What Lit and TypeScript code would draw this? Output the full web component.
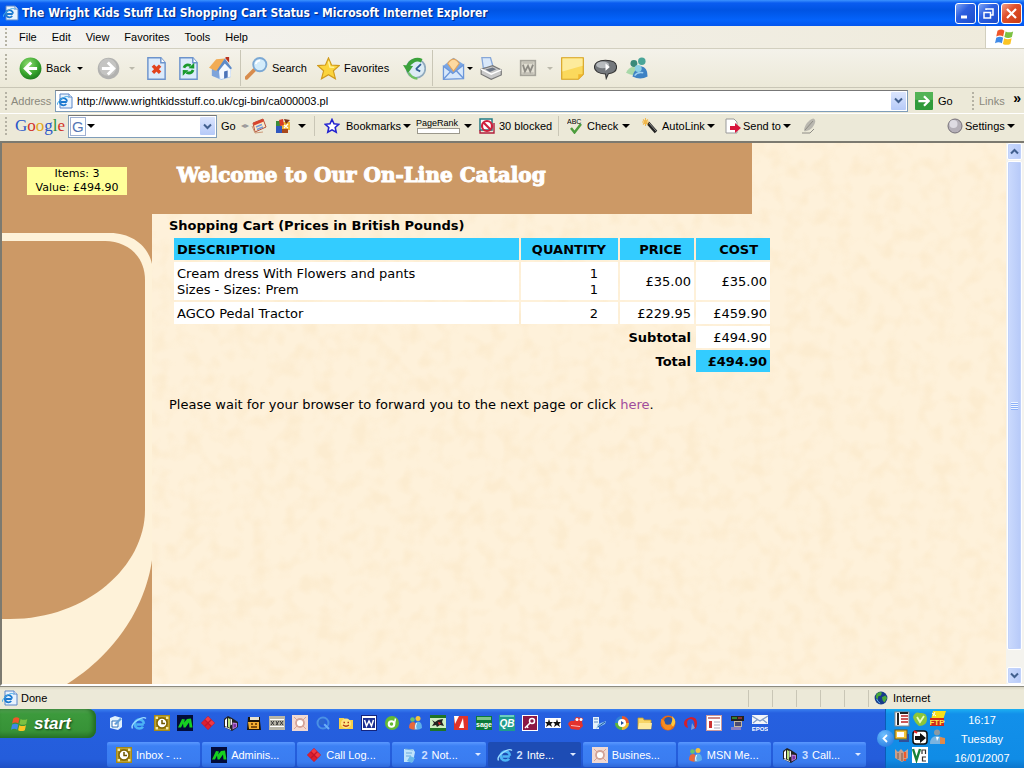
import { LitElement, html, svg, css } from "lit";
import { customElement, property } from "lit/decorators.js";
import { classMap } from "lit/directives/class-map.js";

const flag = svg`
  <path d="M2 3q3-2 5.500 0l-1 4.500q-2.500-1.500-5.500 0z" fill="#f0562a"/>
  <path d="M8.500 3.500q3 1.500 6 0l-1 4.500q-3 1.500-6 0z" fill="#7cc142"/>
  <path d="M1 8.500q3-1.500 5.500 0l-1 4.500q-2.500-1.500-5.500 0z" fill="#3f8ae8"/>
  <path d="M7.300 9q3 1.500 6 0l-1 4.500q-3 1.500-6 0z" fill="#fbc424"/>`;
const ieMark = svg`
  <path d="M12.800 9.500H5.300M12.900 8.800A4.600 4.600 0 1 0 12 11.700" fill="none" stroke="#4db4f5" stroke-width="2.600"/>
  <path d="M1.500 13.500Q-.5 10 6 5.500T15 3.500" fill="none" stroke="#9bdcff" stroke-width="1.400"/>`;
const cube = svg`
  <path d="M1 4l4-3 4 2 6 4v5l-6 4-8-4z" fill="#222"/>
  <path d="M2 5l2-2v9l-2-1z" fill="#fff"/><path d="M5 3l2 1v9l-2-1z" fill="#b8e07c"/>
  <path d="M7.500 3.500l1.500 1v5l-1.500 1z" fill="#eee"/>
  <path d="M9.500 7.500l4.500.5v4l-4.500 2.500z" fill="#b87ad8"/><path d="M10.500 9l2.500.3v2.500l-2.500 1z" fill="#7a2fa0"/><path d="M2 12l6 2.500" stroke="#ddd"/>`;
const messenger = svg`
  <circle cx="5.500" cy="4.500" r="2.300" fill="#69c36c"/><path d="M2 13q0-6 4-6t5 7q-5 2-9-1z" fill="#e8683c"/>
  <circle cx="11" cy="3.500" r="2.500" fill="#f5c33c"/><path d="M7.500 14.500q0-8 3.500-8 4 0 4 6.500-3 2.500-7.500 1.500z" fill="#5fb0ea"/><path d="M9 14q-1-3 .5-6" stroke="#fff" fill="none"/>`;
const outlook = svg`
  <rect width="16" height="16" fill="#a98a12"/><rect x="1.500" y="1.500" width="13" height="13" fill="#f4e9a4"/>
  <path d="M4 1.500h8v13H4zM1.500 4h13v8h-13z" fill="#a98a12"/>
  <circle cx="8" cy="8" r="5" fill="#fff" stroke="#7d6506" stroke-width="1.400"/><path d="M8 5v3.500h3" fill="none" stroke="#6b5500" stroke-width="1.500"/>`;
const admin = svg`
  <rect width="16" height="16" fill="#020c3a"/><path d="M1 12.500L5 4l3 .5-1 3L10 4l4-.5 1.500 9h-3L12 7.500l-3.500 5h-2L6 8.500l-2 4z" fill="#16d022"/>`;
const diamond = svg`
  <path d="M8 1l7 7-7 7-7-7z" fill="#c4162a"/>
  <path d="M8 1.500L10.800 4.300 8 7.100 5.200 4.300zM11.700 5.200L14.500 8l-2.800 2.800L8.900 8z" fill="#f03a44"/><path d="M4.300 5.200L7.100 8l-2.800 2.800L1.500 8zM8 8.900l2.800 2.800L8 14.500l-2.800-2.800z" fill="#dc2030"/>`;
const crest = svg`
  <rect width="16" height="16" fill="#f1d9d2"/><circle cx="8" cy="8" r="4" fill="#fff" stroke="#d3a499" stroke-width="1.800"/>
  <path d="M2 2l3 3M14 2l-3 3M2 14l3-3M14 14l-3-3" stroke="#d9a394"/>`;
const pageIe = svg`
  <path d="M3 1h9l3 3v11H3z" fill="#e8f2fd" stroke="#5a86c8"/><path d="M12 1v3h3" fill="#fff" stroke="#5a86c8"/>
  <path d="M9.800 9H4M10 8.500A3.600 3.600 0 1 0 9.200 11" fill="none" stroke="#1b78cf" stroke-width="1.900"/>
  <path d="M0 12Q0 9 5 5.500T12 4.500" fill="none" stroke="#4aaee8"/>`;

const icons: Record<string, unknown> = {
  flag, pageIe, outlook, admin, diamond, crest, cube, messenger, ie: ieMark,
  back: svg`<defs><radialGradient id="g" cx=".4" cy=".3" r=".8"><stop offset="0" stop-color="#8fdc70"/><stop offset=".6" stop-color="#37a32c"/><stop offset="1" stop-color="#17701a"/></radialGradient></defs>
    <circle cx="8" cy="8" r="7.600" fill="url(#g)"/><path d="M8.500 3.800L4.300 8l4.200 4.200M4.600 8h8" fill="none" stroke="#fff" stroke-width="2"/>`,
  forward: svg`<circle cx="8" cy="8" r="7.500" fill="#b2b2b0"/><circle cx="7.500" cy="7" r="6" fill="#c4c4c2"/><path d="M7.500 3.800L11.700 8l-4.200 4.200M11.400 8h-8" fill="none" stroke="#fff" stroke-width="2"/>`,
  stop: svg`<path d="M2 .5h9L14 4v11.500H2z" fill="#dcebfb" stroke="#6c93cc"/><path d="M11 .5V4h3" fill="#fff" stroke="#6c93cc"/><path d="M5.500 6l5 5M10.500 6l-5 5" stroke="#e2431e" stroke-width="2.400"/>`,
  refresh: svg`<path d="M2 .5h9L14 4v11.500H2z" fill="#dcebfb" stroke="#6c93cc"/><path d="M11 .5V4h3" fill="#fff" stroke="#6c93cc"/><path d="M4.800 7.500Q6 4.500 9.500 6M11.200 9Q10 12 6.500 10.800" fill="none" stroke="#199a2d" stroke-width="1.900"/><path d="M8 7.800l4 .2V4zM8 9.200l-4-.2v4z" fill="#199a2d"/>`,
  home: svg`<path d="M2 7.500l5-2 4-4 4.500 6L15 14l-6.500 2L2 13z" fill="#a9c8f0"/><path d="M6.500 8.500L11 4l4 4v5.500l-7 2z" fill="#f4f8fe"/><path d="M2 8l5 1.500V15l-5-2z" fill="#7ea4da"/><path d="M0 7.500L5 1.500 11 1 6.500 8.800l-2 .8z" fill="#f2ac54"/><path d="M11 1l5 6.800-1.200.8L11 4.500 6.500 10l-1-.7z" fill="#5e8ac8"/><path d="M10.500 10l2.500-.6v4.800l-2.500.7z" fill="#4c73b8"/><path d="M11.500 0H14v4l-2.500-3z" fill="#b8321e"/>`,
  search: svg`<path d="M6.500 9L1 14.500" stroke="#d88c4c" stroke-width="2.600" stroke-linecap="round"/><circle cx="10.300" cy="5.300" r="4.600" fill="#d3ecfb" stroke="#7ba8d4" stroke-width="1.300"/><path d="M7.500 5q.5-2.500 3-2.500" fill="none" stroke="#fff" stroke-width="1.200"/>`,
  star: svg`<path d="M8 .6l2.100 5 5.400.4-4.100 3.600 1.400 5.600L8 12.300l-4.900 2.900 1.500-5.600L.5 6l5.400-.4z" fill="#fbd43c" stroke="#d09a1c" stroke-width=".8"/><path d="M8 3l1 4 3 .2" fill="none" stroke="#fff3a0"/>`,
  history: svg`<circle cx="9" cy="8" r="6.500" fill="#dcebf5" stroke="#8fa9bd" stroke-width="1.200"/><path d="M9 8.500l3.500-3.500M9 8.500l3 1.500" stroke="#315f95" stroke-width="1.200"/><path d="M13 2.600A6.800 6.800 0 0 0 3.500 7" fill="none" stroke="#3ba23a" stroke-width="2.600"/><path d="M0 5.500l7 .8-3.500 5z" fill="#3ba23a"/><path d="M4 11q2 4 6 4" fill="none" stroke="#6dc162" stroke-width="1.600"/>`,
  mail: svg`<path d="M1 6l7-5.500L15 5v10L1 15.500z" fill="#7aa6e4"/><path d="M4 4.500Q8-1.500 12 4.500L8 10z" fill="#fdd9a0" stroke="#e2a45c" stroke-width=".8"/><path d="M1 6.500l6.500 5 7.500-6V15L1 15.500z" fill="#d7e8fb" stroke="#6c97da" stroke-width=".9"/><path d="M1 15.500L6 10M15 15l-5-5.500" stroke="#6c97da"/>`,
  print: svg`<path d="M2 .5h6l2 7H3z" fill="#d9e8fa" stroke="#87a7d8" stroke-width=".9"/><path d="M1.500 8.500l8-2.500 6 3v3.500l-7 3-7-3.500z" fill="#c9c9c9" stroke="#777" stroke-width=".8"/><path d="M1.500 8.500l7 3.500 7-3" fill="none" stroke="#fff"/><path d="M4.500 8.700l5-1.400 2.500 1.200-4.500 2z" fill="#6d7685"/>`,
  wordGray: svg`<rect x="1.500" y="1.500" width="13" height="13" fill="#e2dfd3" stroke="#a5a39a" stroke-width="1.500"/><path d="M3.500 5l1.800 6L8 6l2 5 2.500-6" fill="none" stroke="#8d8b84" stroke-width="1.600"/><path d="M3 12.500h10M3 3.500h10" stroke="#a5a39a" stroke-width=".8"/>`,
  note: svg`<path d="M.5.500h15V12L12 15.500H.5z" fill="#fbd95c" stroke="#d6a11d" stroke-width=".8"/><path d="M1 1h14v5L1 10z" fill="#fdeb9c"/><path d="M15.500 12H12v3.500z" fill="#f1b62c"/>`,
  bubble: svg`<path d="M8 2.200c5 0 7.700 2 7.700 4.800S13 11.300 10 11.600L8.500 15 8 11.800C3 11.800.3 9.600.3 7S3 2.200 8 2.200z" fill="#74787c" stroke="#333" stroke-width=".7"/><ellipse cx="6" cy="5.500" rx="4.500" ry="2.300" fill="#b7bbbe"/><path d="M8 4.500l3 2.500-3 2.500z" fill="#fff"/>`,
  people: svg`<circle cx="5.500" cy="4.500" r="2.400" fill="#3a8a7a"/><circle cx="11" cy="3" r="2.600" fill="#4aa598"/><path d="M0 11q2-4 5-4t4 4q-4 3-9 0z" fill="#a8d8a8"/><path d="M4.500 13.500Q6 8 10.500 6.500 15 7 15 13.500q-5 3-10.500 0z" fill="#3e82c4"/><circle cx="8.500" cy="8" r="2.400" fill="#8cd0e4"/><path d="M6 13q2-3 6-2" stroke="#9fd0f0" fill="none"/>`,
  go: svg`<rect width="16" height="16" rx="1" fill="#2f9a3a"/><path d="M0 0h16v7H0z" fill="#52b355"/><path d="M8 3.800L12.200 8 8 12.200M12 8H3" fill="none" stroke="#fff" stroke-width="2"/>`,
  calendar: svg`<path d="M2 5l10-4 3 8-11 5z" fill="#fbe9c8" stroke="#b5503c"/><path d="M2 5l10-4 .8 2.500L3 7.500z" fill="#d8432c"/><path d="M5 9l6-2.500M6 11.500l6-2.500" stroke="#769ad8" stroke-width="1.500"/><path d="M1 8l3 7 8-1" fill="none" stroke="#c97"/>`,
  gadgets: svg`<rect x="1" y="3" width="6" height="6" fill="#3a8c3a"/><rect x="6" y="4" width="9" height="8" fill="#f2b632"/><rect x="1" y="8" width="6" height="7" fill="#3058c0"/><path d="M4 2l4-1 1 6-4 1z" fill="#d93a26"/><path d="M9 1l6 1-4 4z" fill="#7a3418"/><path d="M7 11h6v4H7z" fill="#a8481c"/><path d="M9 7l4 3M13 6l-4 4" stroke="#fff" stroke-width="1.200"/>`,
  blueStar: svg`<path d="M8 1.500l2 4.300 4.700.5-3.500 3.200 1 4.700L8 11.800l-4.200 2.400 1-4.700L1.300 6.300 6 5.800z" fill="#fff" stroke="#2222d0" stroke-width="1.600"/>`,
  blocked: svg`<rect x="1" y="1" width="12" height="11" fill="#fff" stroke="#227a82" stroke-width="1.500"/><circle cx="8" cy="8" r="5" fill="none" stroke="#cf1f3c" stroke-width="2.200"/><path d="M4.500 4.500l7 7" stroke="#cf1f3c" stroke-width="2.200"/><path d="M1 12v3h14V5" fill="none" stroke="#b01f3c" stroke-width="1.400"/>`,
  check: svg`<text x="0" y="6" font-size="7" font-family="Liberation Sans">ABC</text><path d="M4 10l3.500 4.500L14 6" fill="none" stroke="#4c9d3c" stroke-width="2.400"/>`,
  wand: svg`<path d="M6 5l8 9" stroke="#222" stroke-width="3.400"/><path d="M7 5l7 8" stroke="#aaa" stroke-width=".8"/><path d="M3.500 0v8M0 4h7M1 1.500l5 5M6 1.500l-5 5" stroke="#f2b84a" stroke-width="1.100"/>`,
  send: svg`<path d="M1 1h8l3 3v11H1z" fill="#fff" stroke="#999"/><path d="M5 8h5V5l6 5-6 5v-3H5z" fill="#d8153c"/>`,
  pen: svg`<path d="M3 13Q3 7 9 2q4-3 5 0t-3 8q-4 4-8 3z" fill="#b9b7af"/><path d="M4 12L12 3M1 15h8l4-4" fill="none" stroke="#8e8c85"/>`,
  ball: svg`<circle cx="8" cy="8" r="7" fill="#b5b0b8" stroke="#77727a"/><circle cx="6.500" cy="6" r="4" fill="#dedbe2"/>`,
  globe: svg`<circle cx="8" cy="8" r="7.300" fill="#173a8c"/><path d="M3 3q4-3 6-1l-1 3-3 1-1 4-2-3zM9 7l4-2 2 3-3 5-2-2z" fill="#48a83a"/><path d="M3 9q1 3 4 5" stroke="#6cc3ff" fill="none"/>`,
  desk: svg`<path d="M2 3l5-2 7 2v9l-4 3-8-2z" fill="#dff0fd"/><path d="M4 6h6v6H4z" fill="#fff" stroke="#2d6fb8"/><path d="M6 9l6-6 2 1-6 6z" fill="#5f9cd8"/>`,
  bear: svg`<path d="M2 2h12v4l1 9H1z" fill="#1c1408"/><path d="M4 2h9v3H4z" fill="#e9e2cf"/><path d="M2 7h11v7H3z" fill="#f2ae32"/><path d="M5 9h2M9 9h2M5 12h6" stroke="#5b3100" stroke-width="1.300"/>`,
  film: svg`<path d="M0 1h16v14H0z" fill="#b7b5a8"/><path d="M1 4h14v1H1zM1 11h14v1H1z" fill="#fff"/><path d="M2 6l3 4M5 6l-3 4M7 6l2 4M10 6l-3 4M11 6l3 4M14 6l-3 4" stroke="#333"/>`,
  qt: svg`<circle cx="8" cy="8" r="5.500" fill="none" stroke="#4a90e4" stroke-width="2"/><path d="M9 9l5 5" stroke="#6cb0f8" stroke-width="2"/><circle cx="7" cy="7" r="3" fill="#2c67cf"/>`,
  smile: svg`<path d="M1 3h5l1 2h8v9H1z" fill="#f7cf48"/><circle cx="8" cy="8.500" r="5" fill="#ffe682"/><path d="M5.500 7.500H7M9.500 7.500H11M5 10q3 2.500 6 0" stroke="#b73a12" fill="none" stroke-width="1.300"/>`,
  word: svg`<rect x=".5" y=".5" width="15" height="15" fill="#fff" stroke="#14247c"/><rect x="2" y="3" width="12" height="10" fill="#1c2f92"/><path d="M3.500 5l2 6L8 6l2.500 5 2-6" fill="none" stroke="#fff" stroke-width="1.500"/>`,
  green: svg`<circle cx="8" cy="8" r="7" fill="#65bb33"/><circle cx="7.500" cy="9" r="2.800" fill="none" stroke="#fff" stroke-width="2"/><path d="M11.500 3.500L10 11" stroke="#fff" stroke-width="1.500"/>`,
  dragon: svg`<rect width="16" height="16" fill="#cfeec2"/><path d="M0 0h16v3H0zM0 13h16v3H0z" fill="#1f7426"/><path d="M2 5l3 2 3-2 5-1-1 3 2 4-4-1-3 2-1-2-4 1 2-3z" fill="#222"/><path d="M8 7l3 1-2 2z" fill="#e22"/>`,
  redCard: svg`<rect x="1" y="1" width="14" height="14" fill="#e0332a"/><path d="M1 1h5L2 9zM6 13l4-10 1 10z" fill="#fff"/>`,
  sage: svg`<rect y="1" width="16" height="14" fill="#0d7a3a"/><path d="M1 2h14v3H1z" fill="#7cc48a"/><text x="8" y="12" font-size="7" font-weight="bold" font-family="Liberation Sans" text-anchor="middle" fill="#fff">sage</text>`,
  qb: svg`<rect width="16" height="16" fill="#1f9c8c"/><path d="M1 1h14" stroke="#bfe"/><text x="8" y="12" font-size="10" font-weight="bold" font-style="italic" font-family="Liberation Sans" text-anchor="middle" fill="#fff">QB</text>`,
  key: svg`<rect x=".5" y=".5" width="15" height="15" fill="#8c1845" stroke="#fff"/><circle cx="10" cy="6" r="2.500" fill="none" stroke="#fff" stroke-width="1.500"/><path d="M8 8l-5 5M5 11l1 2" stroke="#fff" stroke-width="1.500"/>`,
  stars: svg`<rect y="3" width="16" height="10" fill="#fff"/><path d="M4 4l1 3h3L6 9l1 3-3-2-3 2 1-3-2-2h3zM12 4l1 3h3l-2 2 1 3-3-2-3 2 1-3-2-2h3z" fill="#111"/>`,
  redMan: svg`<path d="M0 9q2-4 6-3l2-4 7 1-1 4 1 4-4 4-8-1z" fill="#e4322c"/><circle cx="9" cy="4.500" r="1.500" fill="#fff"/><circle cx="13" cy="4.500" r="1.500" fill="#fff"/><path d="M3 10.500l9 1" stroke="#fbb"/>`,
  tools: svg`<path d="M2 2h6v12H2z" fill="#e7f2fb"/><path d="M3 4h4M3 7h4" stroke="#5a8ac0"/><path d="M5 14l2-5 8-3-1 3-6 3z" fill="#8cc0ea"/><path d="M7 12l7-5" stroke="#1d5aa8"/>`,
  media: svg`<circle cx="8" cy="8" r="7" fill="#2f7fd6"/><path d="M8 1a7 7 0 0 1 7 7H8z" fill="#e8552a"/><path d="M15 8a7 7 0 0 1-7 7V8z" fill="#f0b92c"/><path d="M8 15a7 7 0 0 1-7-7h7z" fill="#5cb23a"/><circle cx="8" cy="8" r="4" fill="#fff"/><path d="M7 6l3 2-3 2z" fill="#234f9a"/>`,
  folder: svg`<path d="M1 3h5l1 2h7v9H1z" fill="#f7d467" stroke="#c99a24" stroke-width=".8"/><path d="M2 8h13l-1 6H1z" fill="#fdeaa0"/>`,
  firefox: svg`<circle cx="8" cy="8" r="7.500" fill="#e56a17"/><circle cx="8.500" cy="6.500" r="4.500" fill="#2a55a8"/><path d="M1 4q4 1 4 4t7 1q1 5-4 6-7-2-7-11z" fill="#f58c20"/><path d="M12 1q6 5 1 11l-2-3q2-4 1-8z" fill="#ffc83c"/>`,
  opera: svg`<path d="M8 2q6 0 6 6t-3 6q2-9-3-10-6 0-3 9-4-1-4-5t7-6z" fill="#d41f2a"/><path d="M9 8l3 5-4 2z" fill="#7a9ed8"/>`,
  form: svg`<rect x=".5" y=".5" width="15" height="15" fill="#fff" stroke="#c99"/><path d="M2 3h12" stroke="#c88" stroke-width="2"/><path d="M3 6h3v7H3z" fill="#c33"/><path d="M8 7h6M8 10h6M8 13h6" stroke="#aab"/>`,
  server: svg`<path d="M2 1h13v5H2z" fill="#25221c"/><path d="M3 3h5" stroke="#4d4"/><path d="M9 3h4" stroke="#e44"/><path d="M5 6h8v6H5z" fill="#c3b7a0"/><path d="M6 7h6v4H6z" fill="#4a4a70"/><path d="M2 12h10v3H2z" fill="#8a7fc0"/>`,
  epos: svg`<path d="M0 0h16v9H0z" fill="#f2f5fa"/><path d="M0 1l8 5 8-5M1 8l5-4M15 8l-5-4" fill="none" stroke="#7f9cc8" stroke-width="1.200"/><text x="8" y="15.500" font-size="6" font-weight="bold" font-family="Liberation Sans" text-anchor="middle" fill="#fff">EPOS</text>`,
  notes: svg`<path d="M3 2h9l2 3-2 10H3z" fill="#bfe3fb"/><path d="M4 2l8 1M5 6h6M5 9h5" stroke="#6ba8dc"/><path d="M9 9l5 2-3 5-5-2z" fill="#6ab8ea"/>`,
  phone: svg`<rect x="1" y="1" width="14" height="14" fill="#fff" stroke="#888"/><path d="M3 2h2v12H3z" fill="#222"/><path d="M7 5h7M7 8h7M7 11h7" stroke="#b22" stroke-width="1.500"/><path d="M6 2h8" stroke="#222" stroke-width="2"/>`,
  shield: svg`<path d="M1 6q2-6 7-4 7-1 7 6t-8 7Q2 11 1 6z" fill="#8cc63a"/><path d="M5 6l3 5 4-6" fill="none" stroke="#eaffc0" stroke-width="1.800"/>`,
  ftp: svg`<path d="M3 0h13l-3 9H1z" fill="#f7e01a"/><path d="M0 7h14v8H0z" fill="#d0281c"/><text x="7" y="14" font-size="8" font-weight="bold" font-family="Liberation Sans" text-anchor="middle" fill="#ffe94a">FTP</text><path d="M2 2l4 3M5 1L3 5" stroke="#fff"/>`,
  monitors: svg`<rect x="1" y="1" width="12" height="9" fill="#f3c43c" stroke="#7a5c10"/><rect x="3" y="3" width="7" height="5" fill="#fff"/><path d="M5 12h9V5" fill="none" stroke="#2f4f9a" stroke-width="2"/>`,
  arrowBox: svg`<rect x="1" y="2" width="14" height="13" rx="3" fill="#fff" stroke="#111" stroke-width="1.500"/><path d="M3 7h5V4l6 5-6 5v-3H3z" fill="#111"/><path d="M2 2l3 2" stroke="#e22" stroke-width="2"/>`,
  user: svg`<circle cx="7" cy="3.500" r="3" fill="#8a9aa4"/><path d="M0 15q0-8 7-8t7 8z" fill="#7ab4e0"/><path d="M6 8l1 4 2-4z" fill="#fff"/><path d="M10 8l5 1v6h-5z" fill="#e08a4a"/>`,
  warn: svg`<path d="M1 2l3 3 3-3 3 3 4-3v9l-6 4-7-4z" fill="#c8a08c"/><path d="M4 6v6M8 6v8" stroke="#7b5848"/><path d="M11 5v6M11 12v2" stroke="#f0582a" stroke-width="2.200"/>`,
  vnc: svg`<rect width="16" height="16" fill="#fff"/><path d="M1 2l3.500 11L8 2" fill="none" stroke="#16813a" stroke-width="2.400"/><path d="M10 7V3h3.500v4M14 10h-3.500v4H14" fill="none" stroke="#333" stroke-width="1.200"/>`,
};

@customElement("x-icon")
export class XIcon extends LitElement {
  @property() name = "";
  static styles = css`
    :host { display: block; flex: none; width: var(--icon, 16px); height: var(--icon, 16px); }
    svg { display: block; width: 100%; height: 100%; }
  `;
  render() {
    return html`<svg viewBox="0 0 16 16" aria-hidden="true">${icons[this.name]}</svg>`;
  }
}

const ic = (name: string) => html`<x-icon name=${name}></x-icon>`;
const chevron = (d: string) => html`<svg class="chev" viewBox="0 0 9 9" aria-hidden="true"><path d=${d} fill="none" stroke="#42608f" stroke-width="2"/></svg>`;
const down = "M1 2.500L4.500 6 8 2.500";
const up = "M1 6.500L4.500 3 8 6.500";

const quick = ["desk", "ie", "outlook", "admin", "diamond", "cube", "bear", "film", "crest", "qt", "smile", "word", "green", "messenger", "dragon", "redCard", "sage", "qb", "key", "stars", "redMan", "tools", "media", "folder", "firefox", "opera", "form", "server", "epos"];
const tasks = [
  { icon: "outlook", text: "Inbox - ..." },
  { icon: "admin", text: "Adminis..." },
  { icon: "diamond", text: "Call Log..." },
  { icon: "notes", text: "Not...", count: 2 },
  { icon: "ie", text: "Inte...", count: 2, active: true },
  { icon: "crest", text: "Busines..." },
  { icon: "messenger", text: "MSN Me..." },
  { icon: "cube", text: "Call...", count: 3 },
];
const tray = ["phone", "shield", "ftp", "monitors", "arrowBox", "user", "warn", "vnc"];

@customElement("app-root")
export class AppRoot extends LitElement {
  static styles = css`
    :host {
      display: flex; flex-direction: column; height: 100vh; overflow: hidden;
      font: 11px/14px "Liberation Sans", Tahoma, sans-serif; color: #000; background: #ece9d8;
    }
    * { box-sizing: border-box; }
    button, input { font: inherit; color: inherit; border: 0; background: none; padding: 0; margin: 0; min-width: 0; }
    button { display: flex; align-items: center; white-space: nowrap; text-align: left; }
    .row { display: flex; align-items: center; flex: none; }
    .caret { width: 0; height: 0; border: 4px solid transparent; border-top-color: #000; border-bottom: 0; flex: none; }
    .caret.small { border-width: 3px; border-bottom: 0; }
    .caret.dim { border-top-color: #bbb9ac; }
    .grip { width: 2px; height: 18px; flex: none; background: repeating-linear-gradient(#b5b2a4 0 2px, transparent 2px 4px); }
    .sep { width: 1px; height: 36px; background: #c9c6b6; }
    .chev { width: 9px; height: 9px; display: block; }

    .title { height: 26px; padding: 0 2px 0 3px; gap: 2px; color: #fff;
      background: linear-gradient(#3c93ff, #0a5cf0 3px, #0054e3 10px, #0463fb 20px, #0356ee); }
    .title h2 { margin: 0; padding-left: 1px; flex: 1; font: bold 12px/16px "DejaVu Sans Condensed", "DejaVu Sans", sans-serif; text-shadow: 1px 1px 1px #05257c; white-space: nowrap; overflow: hidden; }
    .win { width: 21px; height: 21px; border: 1px solid #fff; border-radius: 3px; justify-content: center;
      background: linear-gradient(135deg, #7fa5f5, #2c5fe0 40%, #1d4dcb); }
    .win svg { width: 17px; height: 17px; }
    .win.close { background: linear-gradient(135deg, #f0a08a, #e0502c 40%, #c83c14); }

    .menu { height: 23px; background: linear-gradient(90deg, #f4f3f0, #efebdc); border-bottom: 1px solid #d2cfbf; padding-left: 5px; }
    .menu nav { display: flex; gap: 15px; padding-left: 12px; flex: 1; }
    .logo { width: 39px; height: 22px; background: #fff; border-left: 1px solid #d2cfbf; display: grid; place-items: center; --icon: 20px; }

    .tools { height: 39px; display: grid; align-items: center; padding-left: 5px; --icon: 23px; border-bottom: 1px solid #c9c6b6;
      background: linear-gradient(#f4f2ea, #ece9d8);
      grid-template-columns: 14px 58px 20px 32px 16px 32px 32px 31px 5px 72px 86px 29px 10px 25px 12px 40px 28px 14px 33px 32px 1fr; }
    .tools button { gap: 4px; }
    .tools .grip { height: 28px; }
    .mid { --icon: 18px; }

    .address { height: 25px; padding: 1px 3px 1px 5px; }
    .address label { width: 48px; padding-left: 4px; color: #8a887c; }
    .box { flex: 1; display: flex; align-items: center; height: 22px; background: #fff; border: 1px solid #7f9db9; border-top-color: #777; padding: 1px; }
    .box input { flex: 1; height: 18px; padding-left: 4px; outline: 0; }
    .drop { width: 15px; height: 18px; justify-content: center; background: linear-gradient(#dbe5fd, #b6caf8); border-radius: 1px; }
    .goBtn { gap: 5px; width: 64px; padding-left: 7px; --icon: 18px; }
    .links { width: 47px; padding-left: 5px; color: #8a887c; display: flex; }
    .links b { color: #000; font-size: 14px; line-height: 8px; margin-left: auto; }

    .google { height: 28px; display: grid; align-items: center; padding: 0 6px 3px 5px; border-top: 1px solid #fff; white-space: nowrap;
      grid-template-columns: 10px 53px 153px 20px 10px 23px 40px 10px 22px 70px 63px 79px 9px 55px 20px 65px 18px 76px 1fr 71px; }
    .brand { font: 17px/20px "Liberation Serif", serif; }
    .b { color: #2a56c8; } .r { color: #d2322a; } .y { color: #e3a81c; } .g { color: #2c9440; }
    .google .box { width: 149px; height: 23px; }
    .gmark { display: flex; align-items: center; gap: 1px; font: 15px/17px "Liberation Sans", sans-serif; color: #5577b4; }
    .gmark span { border: 1px solid #9fb1d3; padding: 0 1px; }
    .google button { gap: 4px; }
    .google button.wide { gap: 7px; padding-left: 1px; }
    .google button.tight { gap: 2px; }
    .google .sep { height: 20px; }
    .rank div { font: 9px/10px "Liberation Sans", sans-serif; }
    .rank div::after { content: ""; display: block; width: 41px; height: 4px; border: 1px solid #9b988c; background: #fff; margin-left: 1px; }
    .arrows { color: #999; font-size: 8px; }

    .view { flex: 1; min-height: 0; display: flex; border-top: 2px solid #7c7a70; border-left: 2px solid #7c7a70; border-bottom: 2px solid #fff; }
    .page { flex: 1; min-width: 0; display: grid; grid-template-columns: 150px 1fr; grid-template-rows: 71px 1fr; position: relative; background: #fef1da;
      font: 13px/16px "DejaVu Sans", Verdana, sans-serif; overflow: hidden; }
    .page > * { position: relative; }
    .page > .texture { position: absolute; inset: 0; width: 100%; height: 100%; }
    .banner { grid-column: 1 / 3; width: 100%; max-width: 750px; background: #cc9966; display: flex; align-items: flex-start; padding: 24px 0 0 25px; gap: 50px; }
    .basket { width: 100px; height: 28px; background: #ffff99; text-align: center; font-size: 11px; line-height: 14px; }
    h1 { margin: 0; color: #fff; font: bold 20px/16px "DejaVu Serif", serif; -webkit-text-stroke: 1px #fff; white-space: nowrap; }
    .side { width: 150px; height: 100%; display: block; }
    main { padding: 4px 16px; }
    main h3 { margin: 0 0 2px 1px; font-size: 13px; line-height: 16px; }
    table { border-spacing: 2px; margin-left: 4px; width: 600px; table-layout: fixed; }
    th, td { padding: 4px 3px 2px; background: #fff; text-align: right; }
    thead th, .sum { background: #33ccff; }
    thead th { padding-right: 12px; }
    th:first-child, td:first-child { text-align: left; }
    td.qty { padding-right: 20px; }
    tfoot th, tfoot th:first-child { background: none; text-align: right; }
    p { margin: 23px 0 0 1px; }
    p a { color: #a04c9c; text-decoration: none; }

    .scroll { width: 18px; flex: none; display: flex; flex-direction: column; background: #f4f3ee; padding: 0 2px 0 1px; gap: 1px; }
    .scroll button, .thumb { border: 1px solid #fff; border-radius: 2px; background: linear-gradient(90deg, #cbdafd, #b6c9f8); justify-content: center; box-shadow: inset 0 0 0 1px #c1d2fb; }
    .scroll button { height: 17px; flex: none; }
    .thumb { flex: 1; display: grid; place-items: center; margin-bottom: 16px; }
    .thumb i { width: 7px; height: 8px; background: repeating-linear-gradient(#eef4fe 0 1px, #8cb0f8 1px 2px); }

    .status { height: 23px; background: linear-gradient(#d9d5c3, #ece9d8 3px); padding: 0 0 0 2px; gap: 3px; border-top: 1px solid #8d8b80; }
    .panes { display: flex; margin-left: auto; }
    .panes i { width: 24px; height: 17px; border-left: 1px solid #c9c6b6; }
    .panes i:last-child { width: 1px; }
    .zone { width: 152px; display: flex; align-items: center; gap: 5px; --icon: 14px; padding-left: 2px; }

    .bar { height: 59px; flex: none; display: flex; color: #fff; background: linear-gradient(#3a80f0, #2660e0 4px, #245ddb 50px, #1e4fc4); }
    .start { width: 96px; height: 29px; padding-left: 11px; gap: 5px; border-radius: 0 8px 8px 0; --icon: 18px;
      background: linear-gradient(#5aa85a, #3c9a3c 5px, #379237 22px, #2a762a); box-shadow: inset -3px 0 4px #226b22;
      font: italic bold 17px/20px "Liberation Sans", sans-serif; text-shadow: 1px 1px 2px #143f14; }
    .launch { flex: 1; min-width: 0; padding: 6px 19px 0 11px; display: flex; flex-direction: column; gap: 11px; }
    .quick { display: flex; gap: 7px; padding-left: 1px; }
    .tasks { display: grid; grid-template-columns: repeat(8, 1fr); gap: 2px; }
    .task { height: 25px; padding: 0 5px 0 9px; gap: 4px; border-radius: 2px; background: linear-gradient(#5a98ff, #3c80f4 4px, #3a7cf0 20px, #2f68d8); }
    .task b { color: #cfe0ff; }
    .task span { flex: 1; }
    .task .caret { border-top-color: #dfeaff; }
    .task.active { background: #1d4cb4; }
    .tray { width: 139px; flex: none; display: grid; grid-template-columns: 60px 1fr; padding: 2px 14px 0 8px; position: relative; background: linear-gradient(#1cb0f2, #1290ea 5px, #108ce6 50px, #0c76cc); border-left: 1px solid #0a5cb8; }
    .trayIcons { display: grid; grid-template-columns: repeat(3, 16px); grid-auto-rows: 16px; gap: 2px; align-content: start; }
    .clock { line-height: 19px; text-align: center; white-space: nowrap; }
    .expand { position: absolute; left: -9px; top: 21px; width: 17px; height: 17px; border-radius: 50%; justify-content: center; background: radial-gradient(circle at 40% 30%, #6fc0ff, #1a70dc); }
  `;

  render() {
    const caret = html`<i class="caret"></i>`;
    const small = html`<i class="caret small"></i>`;
    const dim = html`<i class="caret small dim"></i>`;
    return html`
      <header class="row title">
        ${ic("pageIe")}
        <h2>The Wright Kids Stuff Ltd Shopping Cart Status - Microsoft Internet Explorer</h2>
        <button class="win" aria-label="Minimize"><svg viewBox="0 0 17 17"><path d="M4 12h6" stroke="#fff" stroke-width="3"/></svg></button>
        <button class="win" aria-label="Restore"><svg viewBox="0 0 17 17"><path d="M6 5V4h7v6h-2M4 7.500h6.500V13H4z" fill="none" stroke="#fff" stroke-width="1.500"/></svg></button>
        <button class="win close" aria-label="Close"><svg viewBox="0 0 17 17"><path d="M4 4l9 9M13 4l-9 9" stroke="#fff" stroke-width="2.200"/></svg></button>
      </header>
      <div class="row menu">
        <i class="grip"></i>
        <nav>${["File", "Edit", "View", "Favorites", "Tools", "Help"].map((m) => html`<button>${m}</button>`)}</nav>
        <div class="logo">${ic("flag")}</div>
      </div>
      <div class="tools">
        <i class="grip"></i>
        <button>${ic("back")}Back</button>${small}
        <button aria-label="Forward">${ic("forward")}</button>${dim}
        <button aria-label="Stop">${ic("stop")}</button>
        <button aria-label="Refresh">${ic("refresh")}</button>
        <button aria-label="Home">${ic("home")}</button><i class="sep"></i>
        <button>${ic("search")}Search</button>
        <button>${ic("star")}Favorites</button>
        <button aria-label="History">${ic("history")}</button><i class="sep"></i>
        <button aria-label="Mail">${ic("mail")}</button>${small}
        <button aria-label="Print">${ic("print")}</button>
        <button class="mid" aria-label="Edit">${ic("wordGray")}</button>${dim}
        <button aria-label="Note">${ic("note")}</button>
        <button aria-label="Discuss">${ic("bubble")}</button>
        <button aria-label="Messenger">${ic("people")}</button>
      </div>
      <div class="row address">
        <i class="grip"></i>
        <label for="url">Address</label>
        <div class="box">${ic("pageIe")}<input id="url" value="http://www.wrightkidsstuff.co.uk/cgi-bin/ca000003.pl" /><button class="drop" aria-label="Show addresses">${chevron(down)}</button></div>
        <button class="goBtn">${ic("go")}Go</button>
        <i class="grip"></i>
        <div class="links">Links<b>»</b></div>
      </div>
      <div class="google">
        <i class="grip"></i>
        <div class="brand"><span class="b">G</span><span class="r">o</span><span class="y">o</span><span class="b">g</span><span class="g">l</span><span class="r">e</span></div>
        <div class="box"><div class="gmark"><span>G</span>${caret}</div><input aria-label="Search Google" /><button class="drop" aria-label="Recent searches">${chevron(down)}</button></div>
        <button>Go</button><span class="arrows">◂▸</span>
        <button aria-label="News">${ic("calendar")}</button>
        <button class="wide" aria-label="Gadgets">${ic("gadgets")}${caret}</button><i class="sep"></i>
        <button aria-label="Bookmark">${ic("blueStar")}</button>
        <button class="tight">Bookmarks${caret}</button>
        <button class="rank"><div>PageRank</div>${caret}</button>
        <button>${ic("blocked")}30 blocked</button><i class="sep"></i>
        <button>${ic("check")}<span>Check</span></button>${caret}
        <button>${ic("wand")}AutoLink</button>${caret}
        <button class="tight">${ic("send")}<span>Send to</span>${caret}</button>
        <button aria-label="Highlight">${ic("pen")}</button>
        <button class="tight">${ic("ball")}Settings${caret}</button>
      </div>
      <div class="view">
        <div class="page">
          <svg class="texture" aria-hidden="true">
            <filter id="t" x="0" y="0" width="100%" height="100%" color-interpolation-filters="sRGB"><feTurbulence type="fractalNoise" baseFrequency=".06" numOctaves="2" seed="4"/><feColorMatrix values="0 0 0 0 .97  0 0 0 0 .87  0 0 0 0 .7  3 0 0 0 -1.300"/></filter>
            <rect width="100%" height="100%" filter="url(#t)" opacity=".24"/>
          </svg>
          <div class="banner">
            <div class="basket">Items: 3<br />Value: £494.90</div>
            <h1>Welcome to Our On-Line Catalog</h1>
          </div>
          <svg class="side" aria-hidden="true">
            <rect width="150" height="100%" fill="#cc9966"/>
            <path d="M0 19H108C130 19 146 32 150 50V346C146 375 128 430 65 470H0z" fill="#fef2d9"/>
            <path d="M0 27H103C125 27 143 42 143 66V296C143 352 85 405 8 405H0z" fill="#cc9966"/>
          </svg>
          <main>
            <h3>Shopping Cart (Prices in British Pounds)</h3>
            <table>
              <colgroup><col width="345" /><col width="97" /><col width="74" /><col width="74" /></colgroup>
              <thead><tr><th>DESCRIPTION</th><th>QUANTITY</th><th>PRICE</th><th>COST</th></tr></thead>
              <tbody>
                <tr><td>Cream dress With Flowers and pants<br />Sizes - Sizes: Prem</td><td class="qty">1<br />1</td><td>£35.00</td><td>£35.00</td></tr>
                <tr><td>AGCO Pedal Tractor</td><td class="qty">2</td><td>£229.95</td><td>£459.90</td></tr>
              </tbody>
              <tfoot>
                <tr><th colspan="3">Subtotal</th><td>£494.90</td></tr>
                <tr><th colspan="3">Total</th><td class="sum"><b>£494.90</b></td></tr>
              </tfoot>
            </table>
            <p>Please wait for your browser to forward you to the next page or click <a href="#">here</a>.</p>
          </main>
        </div>
        <div class="scroll">
          <button aria-label="Scroll up">${chevron(up)}</button>
          <div class="thumb"><i></i></div>
          <button aria-label="Scroll down">${chevron(down)}</button>
        </div>
      </div>
      <div class="row status">
        ${ic("pageIe")}Done
        <div class="panes"><i></i><i></i><i></i><i></i><i></i><i></i></div>
        <div class="zone">${ic("globe")}Internet</div>
      </div>
      <footer class="bar">
        <button class="start">${ic("flag")}start</button>
        <div class="launch">
          <div class="quick">${quick.map(ic)}</div>
          <div class="tasks">
            ${tasks.map((t) => html`<button class=${classMap({ task: true, active: !!t.active })}>${ic(t.icon)}${t.count ? html`<b>${t.count}</b>` : ""}<span>${t.text}</span>${t.count ? small : ""}</button>`)}
          </div>
        </div>
        <div class="tray">
          <button class="expand" aria-label="Show hidden icons"><svg class="chev" viewBox="0 0 9 9"><path d="M6 1L2.500 4.500 6 8" fill="none" stroke="#fff" stroke-width="1.800"/></svg></button>
          <div class="trayIcons">${tray.map(ic)}</div>
          <div class="clock">16:17<br />Tuesday<br />16/01/2007</div>
        </div>
      </footer>
    `;
  }
}
